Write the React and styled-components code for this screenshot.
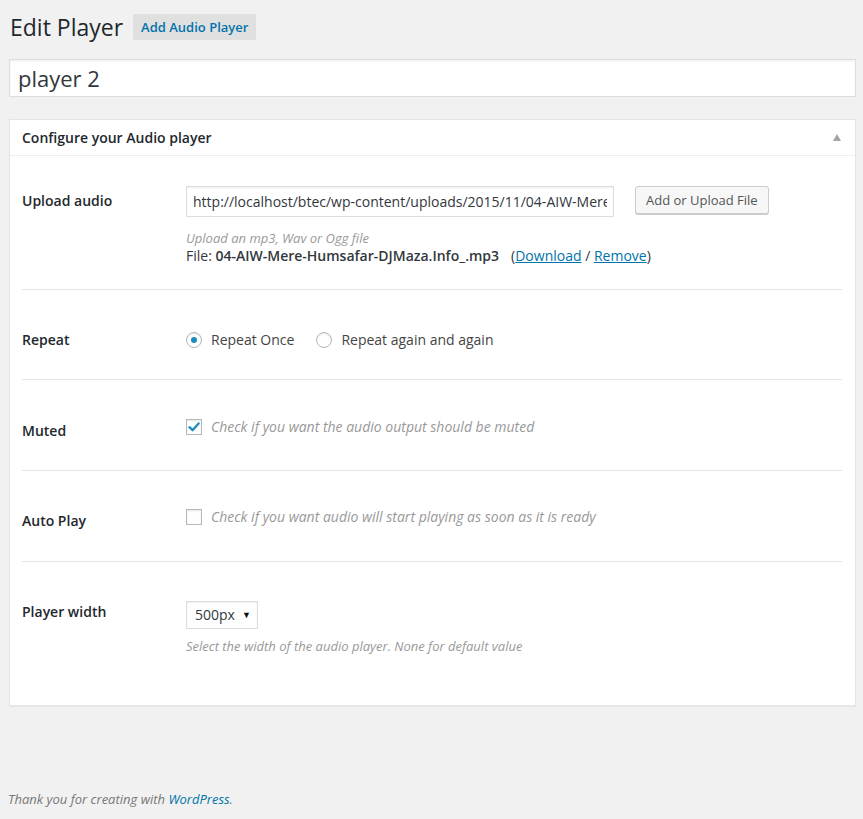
import React from "react";
import styled, { createGlobalStyle } from "styled-components";

const GlobalStyle = createGlobalStyle`
  html, body {
    margin: 0;
    padding: 0;
    background: #f1f1f1;
  }
  body {
    font-family: "Open Sans", "Liberation Sans", sans-serif;
    font-size: 13px;
    color: #444;
  }
`;

function App() {
  return (
    <>
      <GlobalStyle />
      <Page>
        <Wrap>
          <HeadingRow>
            <Title>Edit Player</Title>
            <AddNew>Add Audio Player</AddNew>
          </HeadingRow>
          <TitleInput defaultValue="player 2" />

          <Postbox>
            <PostboxHeader>
              <h2>Configure your Audio player</h2>
              <Toggle />
            </PostboxHeader>
            <Inside>
              <Row $top={30} $bottom={24}>
                <Label $top={6}>Upload audio</Label>
                <Field>
                  <UploadLine>
                    <UrlInput
                      readOnly
                      value="http://localhost/btec/wp-content/uploads/2015/11/04-AIW-Mere-Humsafar-DJMaza.Info_.mp3"
                    />
                    <Button>Add or Upload File</Button>
                  </UploadLine>
                  <Description $top={12}>Upload an mp3, Wav or Ogg file</Description>
                  <FileLine>
                    File: <strong>04-AIW-Mere-Humsafar-DJMaza.Info_.mp3</strong>
                    <Links>
                      (<a href="#">Download</a> / <a href="#">Remove</a>)
                    </Links>
                  </FileLine>
                </Field>
              </Row>

              <Row $top={41} $bottom={30}>
                <Label>Repeat</Label>
                <Field>
                  <Choices>
                    <Choice>
                      <Radio $checked />
                      Repeat Once
                    </Choice>
                    <Choice>
                      <Radio />
                      Repeat again and again
                    </Choice>
                  </Choices>
                </Field>
              </Row>

              <Row $top={42} $bottom={30}>
                <Label>Muted</Label>
                <Field>
                  <Choice $shift={-4}>
                    <Checkbox $checked>
                      <svg width="12" height="10" viewBox="0 0 12 10">
                        <path d="M1.5 5.2 L4.6 8.2 L10.6 1.4" fill="none" stroke="#1e8cbe" strokeWidth="2.3" strokeLinecap="round" strokeLinejoin="round" />
                      </svg>
                    </Checkbox>
                    <Hint>Check if you want the audio output should be muted</Hint>
                  </Choice>
                </Field>
              </Row>

              <Row $top={41} $bottom={31}>
                <Label>Auto Play</Label>
                <Field>
                  <Choice $shift={-4}>
                    <Checkbox />
                    <Hint>Check if you want audio will start playing as soon as it is ready</Hint>
                  </Choice>
                </Field>
              </Row>

              <Row $top={41} $bottom={50} $last>
                <Label>Player width</Label>
                <Field>
                  <Select>
                    <span>500px</span>
                    <span className="arrow">▼</span>
                  </Select>
                  <Description $top={8}>
                    Select the width of the audio player. None for default value
                  </Description>
                </Field>
              </Row>
            </Inside>
          </Postbox>
        </Wrap>
        <Footer>
          Thank you for creating with <a href="#">WordPress</a>.
        </Footer>
      </Page>
    </>
  );
}

const Page = styled.div`
  min-height: 819px;
  display: flex;
  flex-direction: column;
`;

const Wrap = styled.div`
  padding: 14px 7px 0 9px;
`;

const HeadingRow = styled.div`
  display: flex;
  align-items: center;
  height: 26px;
`;

const Title = styled.h1`
  margin: 0 0 0 1px;
  font-size: 23px;
  font-weight: 400;
  line-height: 26px;
  color: #23282d;
`;

const AddNew = styled.span`
  margin-left: 10px;
  height: 26px;
  padding: 0 8px;
  display: flex;
  align-items: center;
  background: #e0e0e0;
  border-radius: 2px;
  color: #0073aa;
  font-size: 13px;
  font-weight: 600;
`;

const TitleInput = styled.input`
  display: block;
  box-sizing: border-box;
  margin-top: 19px;
  width: 100%;
  height: 38px;
  padding: 3px 8px;
  border: 1px solid #ddd;
  box-shadow: inset 0 1px 2px rgba(0, 0, 0, 0.07);
  background: #fff;
  font-family: "Open Sans", "Liberation Sans", sans-serif;
  font-size: 22px;
  color: #32373c;
  outline: none;
`;

const Postbox = styled.div`
  margin-top: 22px;
  background: #fff;
  border: 1px solid #e5e5e5;
  box-shadow: 0 1px 1px rgba(0, 0, 0, 0.04);
`;

const PostboxHeader = styled.div`
  display: flex;
  align-items: center;
  justify-content: space-between;
  height: 35px;
  padding: 0 14px 0 12px;
  border-bottom: 1px solid #eee;

  h2 {
    margin: 0;
    font-size: 14px;
    font-weight: 600;
    color: #23282d;
  }
`;

const Toggle = styled.span`
  width: 0;
  height: 0;
  border-left: 4px solid transparent;
  border-right: 4px solid transparent;
  border-bottom: 7px solid #a0a5aa;
`;

const Inside = styled.div`
  padding: 0 12px;
`;

const Row = styled.div`
  display: grid;
  grid-template-columns: 164px 1fr;
  padding: ${(p) => p.$top}px 0 ${(p) => p.$bottom}px;
  border-bottom: ${(p) => (p.$last ? "none" : "1px solid #e6e6e6")};
  margin-right: 1px;
`;

const Label = styled.div`
  padding-top: ${(p) => p.$top || 0}px;
  font-size: 14px;
  font-weight: 600;
  color: #23282d;
  line-height: 18px;
`;

const Field = styled.div`
  font-size: 14px;
  line-height: 18px;
  color: #444;
`;

const UploadLine = styled.div`
  display: flex;
  align-items: center;
  gap: 21px;
`;

const UrlInput = styled.input`
  box-sizing: border-box;
  width: 428px;
  height: 31px;
  padding: 3px 6px;
  border: 1px solid #ddd;
  box-shadow: inset 0 1px 2px rgba(0, 0, 0, 0.07);
  font-family: "Open Sans", "Liberation Sans", sans-serif;
  font-size: 14px;
  color: #32373c;
  outline: none;
`;

const Button = styled.button`
  height: 28px;
  padding: 0 10px;
  border: 1px solid #ccc;
  border-radius: 3px;
  background: #f7f7f7;
  box-shadow: 0 1px 0 #ccc;
  font-family: "Open Sans", "Liberation Sans", sans-serif;
  font-size: 13px;
  color: #555;
  margin-top: -3px;
`;

const Description = styled.div`
  margin-top: ${(p) => p.$top}px;
  font-size: 13px;
  font-style: italic;
  color: #999;
`;

const FileLine = styled.div`
  font-size: 14px;
  color: #32373c;

  strong {
    font-weight: 600;
  }
`;

const Links = styled.span`
  margin-left: 12px;

  a {
    color: #0073aa;
    text-decoration: underline;
  }
`;

const Choices = styled.div`
  display: flex;
  gap: 22px;
`;

const Choice = styled.label`
  display: flex;
  align-items: center;
  gap: 9px;
  margin-top: ${(p) => p.$shift || 0}px;
`;

const Radio = styled.span`
  box-sizing: border-box;
  width: 16px;
  height: 16px;
  border: 1px solid #b4b9be;
  border-radius: 50%;
  box-shadow: inset 0 1px 2px rgba(0, 0, 0, 0.1);
  display: flex;
  align-items: center;
  justify-content: center;
  flex-shrink: 0;

  &::after {
    content: "";
    display: ${(p) => (p.$checked ? "block" : "none")};
    width: 6px;
    height: 6px;
    border-radius: 50%;
    background: #1e8cbe;
  }
`;

const Checkbox = styled.span`
  box-sizing: border-box;
  width: 16px;
  height: 16px;
  border: 1px solid #b4b9be;
  box-shadow: inset 0 1px 2px rgba(0, 0, 0, 0.1);
  display: flex;
  align-items: center;
  justify-content: center;
  flex-shrink: 0;
  background: #fff;
`;

const Hint = styled.span`
  font-style: italic;
  color: #999;
`;

const Select = styled.div`
  box-sizing: border-box;
  width: 72px;
  height: 28px;
  margin-top: -2px;
  padding: 0 6px 0 8px;
  display: flex;
  align-items: center;
  justify-content: space-between;
  border: 1px solid #ddd;
  box-shadow: inset 0 1px 2px rgba(0, 0, 0, 0.07);
  color: #32373c;
  font-size: 14px;

  .arrow {
    font-size: 9px;
    color: #111;
  }
`;

const Footer = styled.div`
  margin-top: auto;
  padding: 0 0 11px 8px;
  font-size: 13px;
  font-style: italic;
  color: #777;

  a {
    color: #0073aa;
    text-decoration: none;
  }
`;

export default App;
